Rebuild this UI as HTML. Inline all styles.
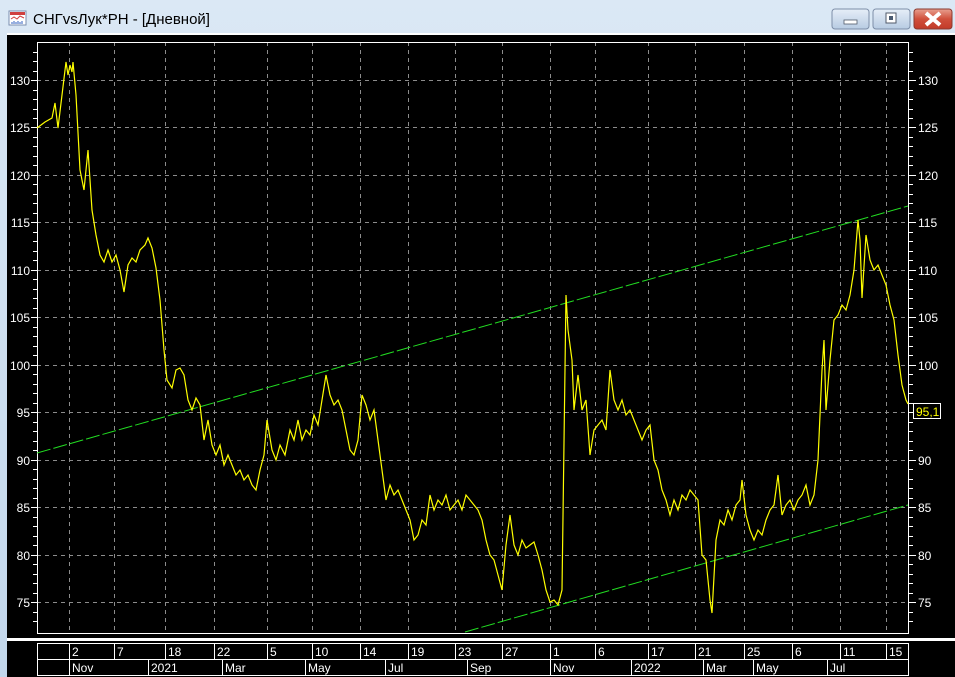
<!DOCTYPE html>
<html><head><meta charset="utf-8"><style>
html,body{margin:0;padding:0;width:955px;height:677px;overflow:hidden;background:#c4d8ec;font-family:"Liberation Sans",sans-serif}
</style></head><body>
<svg width="955" height="677" xmlns="http://www.w3.org/2000/svg" style="position:absolute;left:0;top:0">
<defs>
<linearGradient id="tb" x1="0" y1="0" x2="0" y2="1"><stop offset="0" stop-color="#dbe8f5"/><stop offset="1" stop-color="#c2d7ec"/></linearGradient>
<linearGradient id="bt" x1="0" y1="0" x2="0" y2="1"><stop offset="0" stop-color="#e6eef8"/><stop offset="1" stop-color="#b7cbe2"/></linearGradient>
<linearGradient id="cl" x1="0" y1="0" x2="0" y2="1"><stop offset="0" stop-color="#e8a090"/><stop offset="0.5" stop-color="#d0503c"/><stop offset="1" stop-color="#c23a28"/></linearGradient>
</defs>
<rect x="0" y="0" width="955" height="677" fill="url(#tb)"/>
<rect x="9" y="11" width="17" height="14" fill="#fff" stroke="#7b8fb0"/>
<rect x="10" y="12" width="15" height="3" fill="#d04040"/>
<path d="M11 19 L14 17 L17 19 L20 16 L24 18" stroke="#d04040" fill="none"/>
<path d="M12 24v-2M14 24v-3M16 24v-2M18 24v-3M20 24v-2M22 24v-3" stroke="#3060c0"/>
<text x="33" y="24" font-size="15" fill="#000" font-family="Liberation Sans, sans-serif">СНГvsЛук*РН - [Дневной]</text>
<rect x="832" y="9" width="37" height="20" rx="3" fill="url(#bt)" stroke="#7d8ea8"/>
<rect x="844" y="20" width="13" height="4" fill="#fff" stroke="#505a6a" stroke-width="0.8"/>
<rect x="873" y="9" width="37" height="20" rx="3" fill="url(#bt)" stroke="#7d8ea8"/>
<rect x="886" y="13" width="10" height="10" fill="#fff" stroke="#505a6a"/>
<rect x="889" y="16" width="4" height="4" fill="#4a5a70"/>
<rect x="914" y="9" width="38" height="20" rx="3" fill="url(#cl)" stroke="#8a3a30"/>
<path d="M926 13 L940 25 M940 13 L926 25" stroke="#fff" stroke-width="4"/>
<rect x="7" y="33" width="948" height="644" fill="#000"/>
<rect x="7" y="33" width="948" height="2" fill="#fff"/>
<g stroke="#8c8c8c" stroke-dasharray="4,4" stroke-width="1">
<path d="M69.5 42v591M114.5 42v591M165.5 42v591M214.5 42v591M267.5 42v591M312.5 42v591M360.5 42v591M408.5 42v591M455.5 42v591M502.5 42v591M550.5 42v591M595.5 42v591M648.5 42v591M695.5 42v591M744.5 42v591M792.5 42v591M840.5 42v591M886.5 42v591"/>
<path d="M37 80.5h871M37 127.5h871M37 175.5h871M37 222.5h871M37 270.5h871M37 317.5h871M37 365.5h871M37 412.5h871M37 460.5h871M37 507.5h871M37 555.5h871M37 602.5h871"/>
</g>
<rect x="37.5" y="42.5" width="871" height="591" fill="none" stroke="#fff"/>
<g stroke="#fff">
<path d="M31 80.5h6M31 127.5h6M31 175.5h6M31 222.5h6M31 270.5h6M31 317.5h6M31 365.5h6M31 412.5h6M31 460.5h6M31 507.5h6M31 555.5h6M31 602.5h6"/>
<path d="M908 80.5h8M908 127.5h8M908 175.5h8M908 222.5h8M908 270.5h8M908 317.5h8M908 365.5h8M908 412.5h8M908 460.5h8M908 507.5h8M908 555.5h8M908 602.5h8"/>
<path d="M33 52.5h4M33 61.5h4M33 71.5h4M33 90.5h4M33 99.5h4M33 109.5h4M33 118.5h4M33 137.5h4M33 146.5h4M33 156.5h4M33 165.5h4M33 184.5h4M33 194.5h4M33 203.5h4M33 213.5h4M33 232.5h4M33 241.5h4M33 251.5h4M33 260.5h4M33 279.5h4M33 289.5h4M33 298.5h4M33 308.5h4M33 327.5h4M33 336.5h4M33 346.5h4M33 355.5h4M33 374.5h4M33 384.5h4M33 393.5h4M33 403.5h4M33 422.5h4M33 431.5h4M33 441.5h4M33 450.5h4M33 469.5h4M33 479.5h4M33 488.5h4M33 498.5h4M33 517.5h4M33 526.5h4M33 536.5h4M33 545.5h4M33 564.5h4M33 574.5h4M33 583.5h4M33 593.5h4M33 612.5h4M33 621.5h4"/>
<path d="M908 52.5h5M908 61.5h5M908 71.5h5M908 90.5h5M908 99.5h5M908 109.5h5M908 118.5h5M908 137.5h5M908 146.5h5M908 156.5h5M908 165.5h5M908 184.5h5M908 194.5h5M908 203.5h5M908 213.5h5M908 232.5h5M908 241.5h5M908 251.5h5M908 260.5h5M908 279.5h5M908 289.5h5M908 298.5h5M908 308.5h5M908 327.5h5M908 336.5h5M908 346.5h5M908 355.5h5M908 374.5h5M908 384.5h5M908 393.5h5M908 403.5h5M908 422.5h5M908 431.5h5M908 441.5h5M908 450.5h5M908 469.5h5M908 479.5h5M908 488.5h5M908 498.5h5M908 517.5h5M908 526.5h5M908 536.5h5M908 545.5h5M908 564.5h5M908 574.5h5M908 583.5h5M908 593.5h5M908 612.5h5M908 621.5h5"/>
</g>
<g fill="#fff" font-size="12" font-family="Liberation Sans, sans-serif">
<g text-anchor="end">
<text x="30" y="85">130</text><text x="30" y="132">125</text><text x="30" y="180">120</text><text x="30" y="227">115</text><text x="30" y="275">110</text><text x="30" y="322">105</text><text x="30" y="370">100</text><text x="30" y="417">95</text><text x="30" y="465">90</text><text x="30" y="512">85</text><text x="30" y="560">80</text><text x="30" y="607">75</text>
</g>
<text x="918" y="85">130</text><text x="918" y="132">125</text><text x="918" y="180">120</text><text x="918" y="227">115</text><text x="918" y="275">110</text><text x="918" y="322">105</text><text x="918" y="370">100</text><text x="918" y="465">90</text><text x="918" y="512">85</text><text x="918" y="560">80</text><text x="918" y="607">75</text>
</g>
<g stroke="#22dd22" stroke-width="1" stroke-dasharray="14,3" fill="none">
<path d="M37 453 L908 206"/>
<path d="M465 632 L908 505"/>
</g>
<polyline fill="none" stroke="#ffff00" stroke-width="1.2" points="37,128 45,122 52,118 55,103 58,128 62,95 66,62 68,75 70,65 72,72 73,62 76,95 80,170 84,190 88,150 92,210 96,235 100,255 104,262 108,250 112,262 116,255 120,270 124,292 128,265 132,258 136,262 140,250 145,245 148,238 152,248 156,268 160,300 164,350 167,380 172,388 176,370 180,368 184,375 188,400 192,410 196,398 200,405 204,440 208,420 212,445 216,455 220,445 224,465 228,455 232,465 236,475 240,470 244,480 248,475 252,485 256,490 260,470 264,455 267,420 272,450 276,460 280,445 285,455 290,430 294,440 298,420 302,440 306,430 310,435 314,415 318,425 322,400 326,375 330,395 334,405 338,400 342,410 346,430 350,450 354,455 358,440 362,395 366,405 370,420 374,410 378,440 382,470 386,500 390,485 394,495 398,490 402,500 406,510 410,520 414,540 418,535 422,520 426,525 430,495 434,510 438,500 442,505 446,495 450,510 454,505 458,500 462,510 466,495 470,500 474,505 478,510 482,520 486,540 490,555 494,560 498,575 502,590 506,545 510,515 514,545 518,555 522,540 526,548 530,545 534,542 538,555 542,570 546,590 550,602 554,600 558,605 562,590 566,295 568,330 572,360 574,410 578,375 582,410 586,400 590,455 594,430 598,425 602,420 606,430 610,370 614,400 618,410 622,400 626,415 630,410 634,420 638,430 642,440 646,430 650,425 654,460 658,470 662,490 666,500 670,515 674,500 678,510 682,495 686,500 690,490 694,495 698,500 702,555 706,560 710,600 712,613 716,540 720,520 724,525 728,510 732,520 736,505 740,500 742,480 746,515 750,530 754,540 758,530 762,535 766,520 770,510 774,505 778,475 782,515 786,505 790,500 794,510 798,500 802,495 806,485 810,505 814,495 818,460 822,370 824,340 826,410 830,360 834,320 838,315 842,305 846,310 850,295 854,270 858,220 860,240 862,298 866,235 870,260 874,270 878,265 882,275 886,285 890,305 894,320 898,355 902,385 906,400 908,404"/>
<rect x="913.5" y="403.5" width="27" height="15" fill="#000" stroke="#fff"/>
<text x="916" y="416" fill="#ffff00" font-size="12" font-family="Liberation Sans, sans-serif">95,1</text>
<rect x="7" y="638" width="948" height="3" fill="#fff"/>
<g stroke="#fff" fill="none">
<rect x="37.5" y="643.5" width="871" height="32"/>
<path d="M37 659.5h871"/>
<path d="M69.5 643v16M114.5 643v16M165.5 643v16M214.5 643v16M267.5 643v16M312.5 643v16M360.5 643v16M408.5 643v16M455.5 643v16M502.5 643v16M550.5 643v16M595.5 643v16M648.5 643v16M695.5 643v16M744.5 643v16M792.5 643v16M840.5 643v16M886.5 643v16"/>
<path d="M69.5 659v17M148.5 659v17M222.5 659v17M305.5 659v17M385.5 659v17M467.5 659v17M550.5 659v17M631.5 659v17M703.5 659v17M753.5 659v17M827.5 659v17"/>
</g>
<g fill="#fff" font-size="12" font-family="Liberation Sans, sans-serif">
<text x="72" y="656">2</text><text x="117" y="656">7</text><text x="168" y="656">18</text><text x="217" y="656">22</text><text x="270" y="656">5</text><text x="315" y="656">10</text><text x="363" y="656">14</text><text x="411" y="656">19</text><text x="458" y="656">23</text><text x="505" y="656">27</text><text x="553" y="656">1</text><text x="598" y="656">6</text><text x="651" y="656">17</text><text x="698" y="656">21</text><text x="747" y="656">25</text><text x="795" y="656">6</text><text x="843" y="656">11</text><text x="889" y="656">15</text>
<text x="72" y="672">Nov</text><text x="151" y="672">2021</text><text x="225" y="672">Mar</text><text x="308" y="672">May</text><text x="388" y="672">Jul</text><text x="470" y="672">Sep</text><text x="553" y="672">Nov</text><text x="634" y="672">2022</text><text x="706" y="672">Mar</text><text x="756" y="672">May</text><text x="830" y="672">Jul</text>
</g>
</svg>
</body></html>
